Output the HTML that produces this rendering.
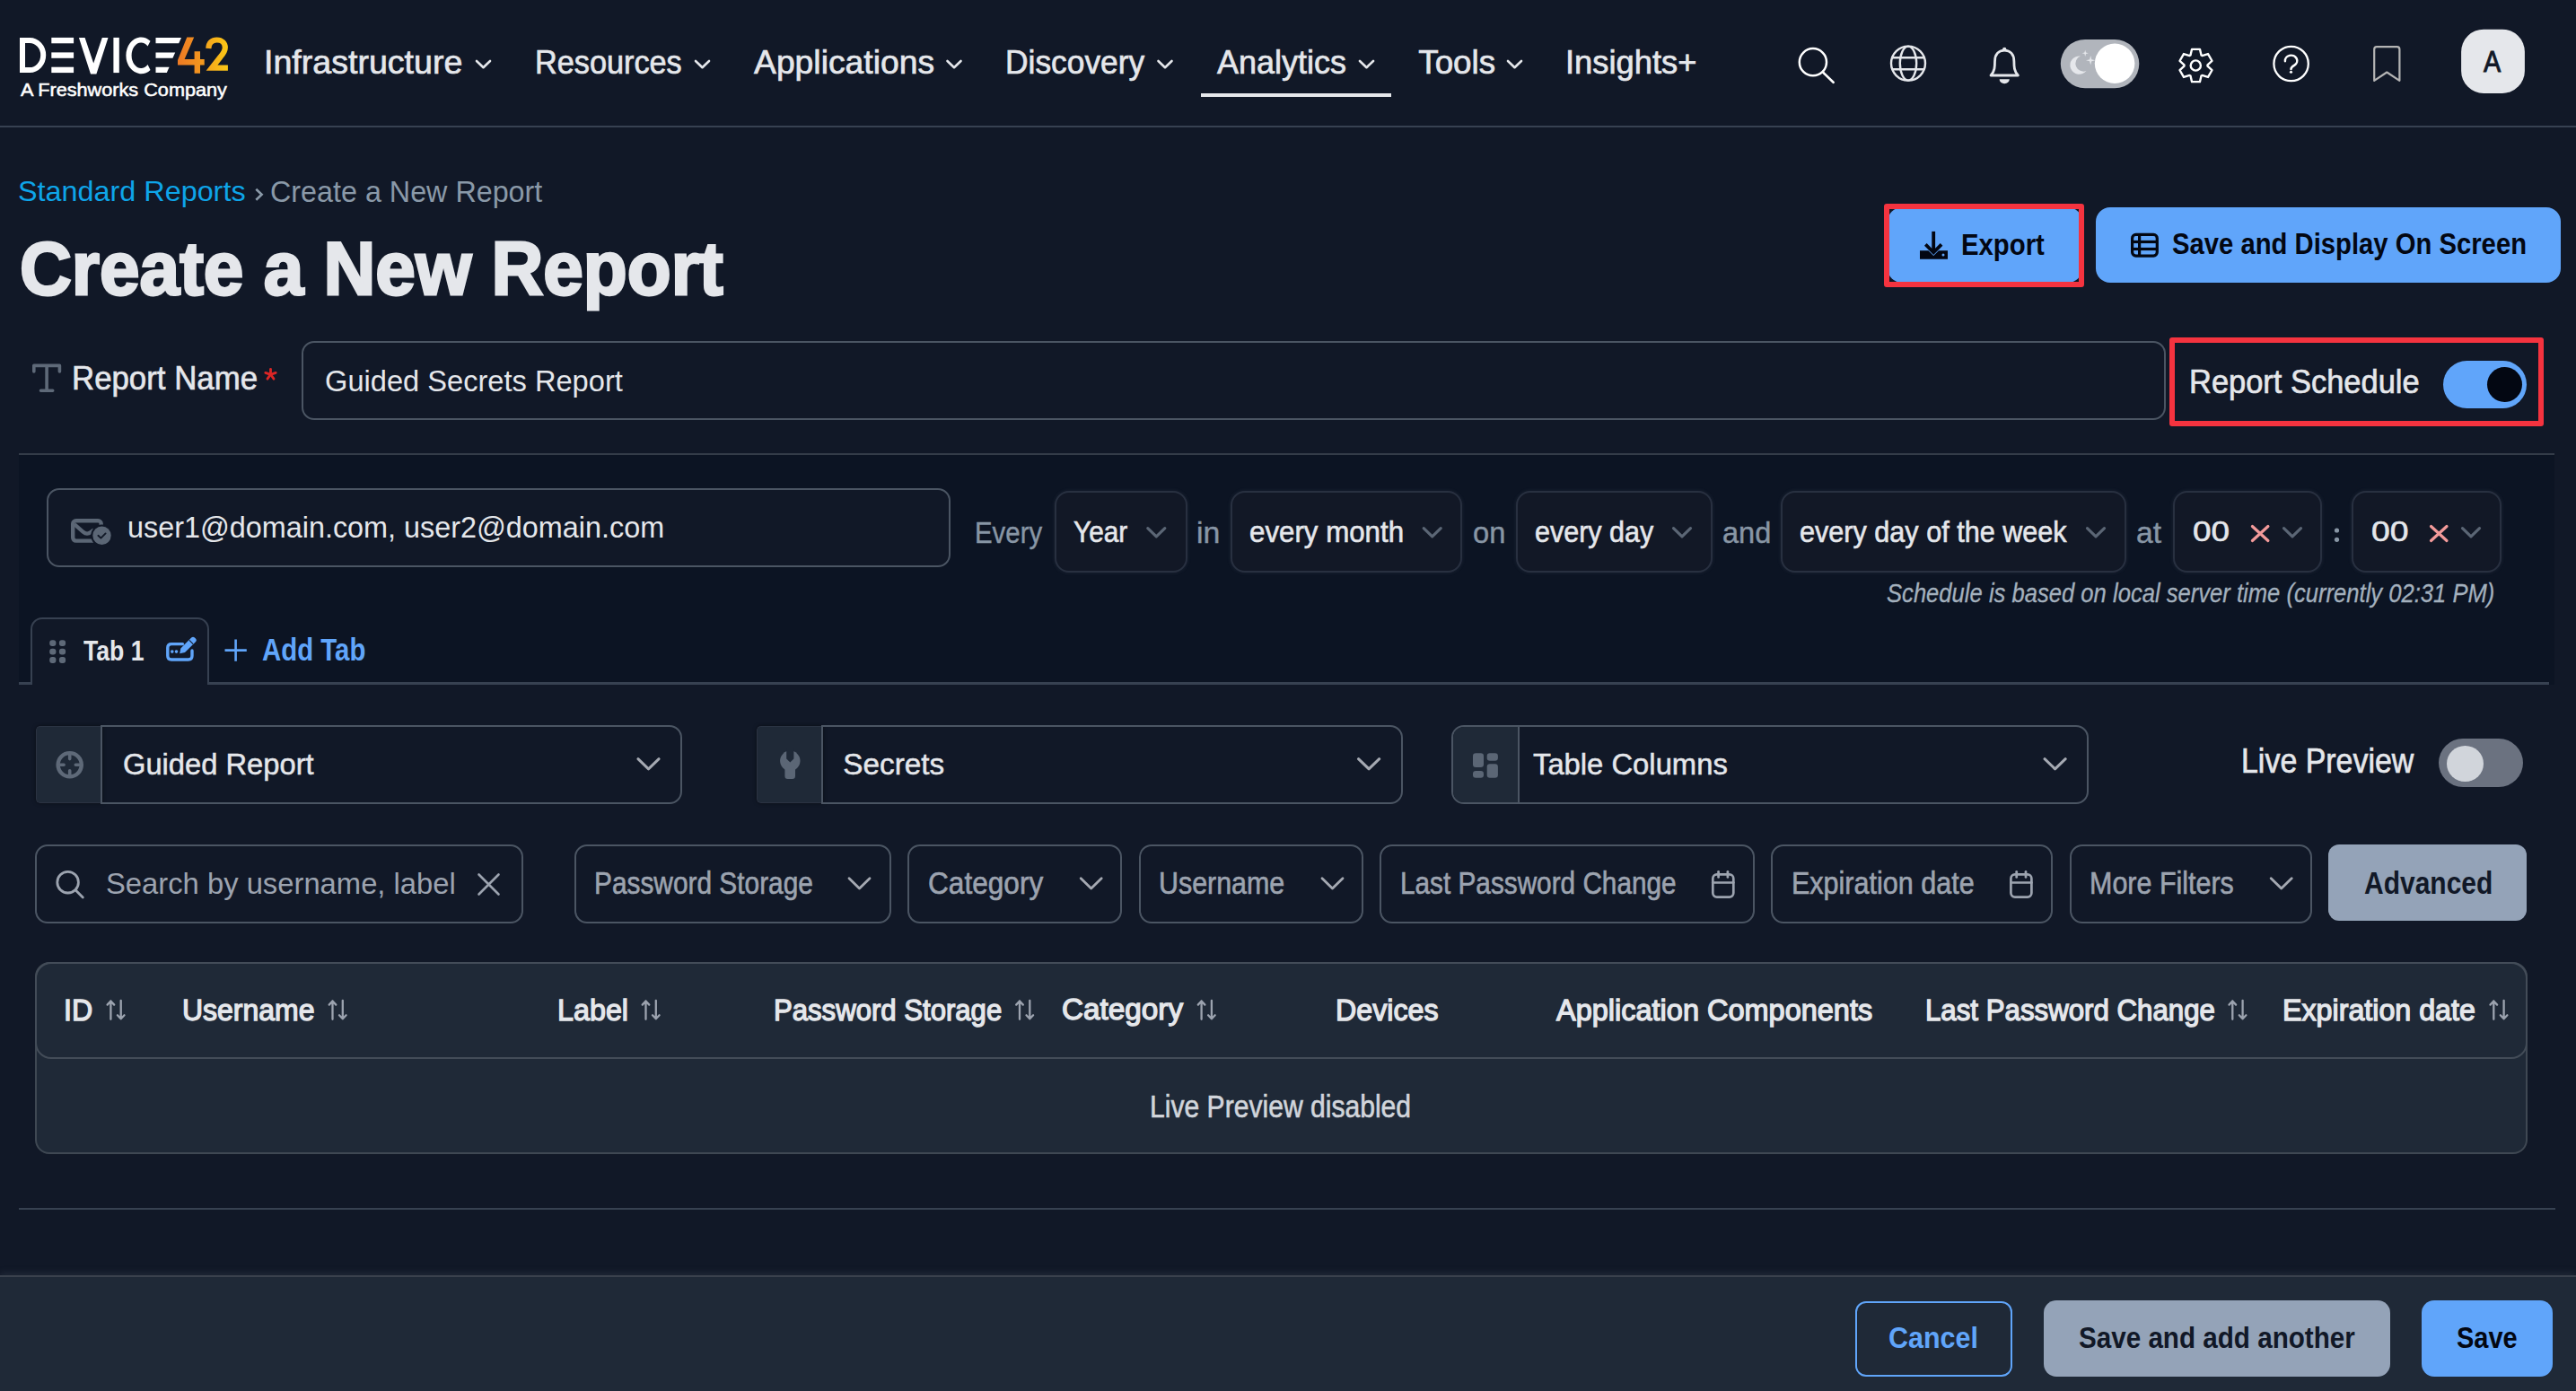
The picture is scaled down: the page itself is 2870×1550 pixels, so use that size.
<!DOCTYPE html>
<html><head><meta charset="utf-8"><title>Create a New Report</title>
<style>
html,body{margin:0;padding:0}
body{width:2870px;height:1550px;background:#111827;position:relative;overflow:hidden;font-family:"Liberation Sans",sans-serif}
.b{position:absolute}
.t{position:absolute;white-space:pre;line-height:1;transform-origin:0 0}
.ov{position:absolute;left:0;top:0}
</style></head><body>
<div class="b" style="left:0px;top:140px;width:2870px;height:2px;background:#374151"></div><div class="b" style="left:21px;top:505px;width:2825px;height:258px;background:#0c1423;border-top:2px solid #343c48;box-sizing:border-box"></div><div class="b" style="left:2103px;top:231px;width:217px;height:84px;background:#60a5fa;border-radius:16px"></div><div class="b" style="left:2335px;top:231px;width:518px;height:84px;background:#60a5fa;border-radius:16px"></div><div class="b" style="left:336px;top:380px;width:2077px;height:88px;border:2px solid #4b5563;border-radius:14px;box-sizing:border-box"></div><div class="b" style="left:52px;top:543.5px;width:1007px;height:88px;border:2px solid #4b5563;border-radius:14px;box-sizing:border-box;background:#111827"></div><div class="b" style="left:1174.5px;top:546.5px;width:148px;height:91.9px;background:#121826;border:2px solid #283040;border-radius:16px;box-sizing:border-box;box-shadow:0 0 4px rgba(120,130,150,0.16)"></div><div class="b" style="left:1370.8px;top:546.5px;width:258.2px;height:91.9px;background:#121826;border:2px solid #283040;border-radius:16px;box-sizing:border-box;box-shadow:0 0 4px rgba(120,130,150,0.16)"></div><div class="b" style="left:1688.7px;top:546.5px;width:219.3px;height:91.9px;background:#121826;border:2px solid #283040;border-radius:16px;box-sizing:border-box;box-shadow:0 0 4px rgba(120,130,150,0.16)"></div><div class="b" style="left:1984px;top:546.5px;width:384.6px;height:91.9px;background:#121826;border:2px solid #283040;border-radius:16px;box-sizing:border-box;box-shadow:0 0 4px rgba(120,130,150,0.16)"></div><div class="b" style="left:2420.7px;top:546.5px;width:166.8px;height:91.9px;background:#121826;border:2px solid #283040;border-radius:16px;box-sizing:border-box;box-shadow:0 0 4px rgba(120,130,150,0.16)"></div><div class="b" style="left:2619.6px;top:546.5px;width:167.9px;height:91.9px;background:#121826;border:2px solid #283040;border-radius:16px;box-sizing:border-box;box-shadow:0 0 4px rgba(120,130,150,0.16)"></div><div class="b" style="left:34px;top:687.5px;width:199px;height:75.5px;background:#111827;border:2.5px solid #374151;border-bottom:none;border-radius:13px 13px 0 0;box-sizing:border-box"></div><div class="b" style="left:21px;top:760px;width:13px;height:2.5px;background:#374151"></div><div class="b" style="left:233px;top:760px;width:2607px;height:2.5px;background:#374151"></div><div class="b" style="left:40px;top:808.5px;width:74px;height:86.5px;background:#1f2937;border:1.5px solid #2b3342;border-right:none;border-radius:5px 0 0 5px;box-sizing:border-box;box-shadow:0 0 4px rgba(0,0,0,0.5)"></div><div class="b" style="left:112px;top:808px;width:647.6px;height:88px;border:2px solid #4b5563;border-radius:0 14px 14px 0;box-sizing:border-box"></div><div class="b" style="left:843px;top:808.5px;width:74px;height:86.5px;background:#1f2937;border:1.5px solid #2b3342;border-right:none;border-radius:5px 0 0 5px;box-sizing:border-box;box-shadow:0 0 4px rgba(0,0,0,0.5)"></div><div class="b" style="left:915px;top:808px;width:648px;height:88px;border:2px solid #4b5563;border-radius:0 14px 14px 0;box-sizing:border-box"></div><div class="b" style="left:1617px;top:808px;width:710px;height:87.5px;border:2px solid #4b5563;border-radius:14px;box-sizing:border-box;overflow:hidden"></div><div class="b" style="left:1619px;top:810px;width:72px;height:83.5px;background:#1f2937;border-radius:12px 0 0 12px"></div><div class="b" style="left:1691px;top:810px;width:2px;height:83.5px;background:#4b5563"></div><div class="b" style="left:2716.8px;top:822.5px;width:94.2px;height:54.8px;background:#6b7280;border-radius:28px"></div><div class="b" style="left:2726px;top:830.5px;width:41px;height:40px;background:#d1d5db;border-radius:50%"></div><div class="b" style="left:2721.6px;top:401.8px;width:93px;height:53.5px;background:#60a5fa;border-radius:27px"></div><div class="b" style="left:2771px;top:408.5px;width:39px;height:39.1px;background:#030712;border-radius:50%"></div><div class="b" style="left:39px;top:941px;width:544px;height:88px;border:2px solid #4b5563;border-radius:14px;box-sizing:border-box"></div><div class="b" style="left:640px;top:941px;width:353px;height:88px;border:2px solid #4b5563;border-radius:14px;box-sizing:border-box"></div><div class="b" style="left:1011px;top:941px;width:239px;height:88px;border:2px solid #4b5563;border-radius:14px;box-sizing:border-box"></div><div class="b" style="left:1269px;top:941px;width:250px;height:88px;border:2px solid #4b5563;border-radius:14px;box-sizing:border-box"></div><div class="b" style="left:1537px;top:941px;width:418px;height:88px;border:2px solid #4b5563;border-radius:14px;box-sizing:border-box"></div><div class="b" style="left:1973px;top:941px;width:313.5px;height:88px;border:2px solid #4b5563;border-radius:14px;box-sizing:border-box"></div><div class="b" style="left:2305.7px;top:941px;width:270.3px;height:88px;border:2px solid #4b5563;border-radius:14px;box-sizing:border-box"></div><div class="b" style="left:2594px;top:941px;width:221px;height:85px;background:#94a3b8;border-radius:12px"></div><div class="b" style="left:39px;top:1072px;width:2777px;height:214px;background:#1f2937;border:2px solid #3f4853;border-radius:16px;box-sizing:border-box"></div><div class="b" style="left:39px;top:1072px;width:2777px;height:107.5px;border:2px solid #434c58;border-radius:18px;box-sizing:border-box"></div><div class="b" style="left:21px;top:1346px;width:2826px;height:2px;background:#374151"></div><div class="b" style="left:0px;top:1420.5px;width:2870px;height:129.5px;background:#1f2937;border-top:2px solid #3a414d;box-sizing:border-box;box-shadow:0 -4px 6px rgba(70,80,95,0.22)"></div><div class="b" style="left:2066.5px;top:1449.5px;width:175px;height:84px;border:2px solid #60a5fa;border-radius:12px;box-sizing:border-box"></div><div class="b" style="left:2277px;top:1449px;width:385.6px;height:84.5px;background:#94a3b8;border-radius:14px"></div><div class="b" style="left:2698px;top:1449px;width:145.6px;height:84.5px;background:#60a5fa;border-radius:14px"></div>
<svg class="ov" width="2870" height="1550" viewBox="0 0 2870 1550"><defs><linearGradient id="g4" x1="0" y1="0" x2="1" y2="0"><stop offset="0" stop-color="#ee7a24"/><stop offset="1" stop-color="#f39a1e"/></linearGradient><linearGradient id="g2" x1="0" y1="0" x2="1" y2="0"><stop offset="0" stop-color="#f5a81c"/><stop offset="1" stop-color="#fcc815"/></linearGradient></defs><path d="M25 45 V78 H33 A15.2 16.5 0 0 0 33 45 Z" fill="none" stroke="#ffffff" stroke-width="6"/><rect x="57.3" y="41.9" width="24.8" height="6.4" fill="#ffffff"/><rect x="57.3" y="58.4" width="24.8" height="6.4" fill="#ffffff"/><rect x="57.3" y="74.7" width="24.8" height="6.4" fill="#ffffff"/><polygon points="87.9,41.9 94.6,41.9 104.2,70.5 113.8,41.9 120.5,41.9 107.4,82.6 101,82.6" fill="#ffffff"/><rect x="126.4" y="41.9" width="6.4" height="39.2" fill="#ffffff"/><path d="M167.54 45.72 A16.8 20.4 0 1 0 167.54 77.88 L164.56 72.01 A10.6 14.2 0 1 1 164.56 51.59 Z" fill="#ffffff"/><polygon points="173.5,41.9 202,41.9 199.2,48.3 173.5,48.3" fill="#ffffff"/><polygon points="173.5,58.4 195.2,58.4 192.4,64.8 173.5,64.8" fill="#ffffff"/><polygon points="173.5,74.7 188.6,74.7 185.8,81.1 173.5,81.1" fill="#ffffff"/><polygon points="208.3,41.5 216.2,41.5 205.6,66 216.6,66 216.6,57.3 223,57.3 223,66 227.7,66 227.7,72.4 223,72.4 223,81.7 216.6,81.7 216.6,72.4 198,72.4 198,67" fill="url(#g4)"/><path d="M232.3 54 C232.6 47.5 236.5 44.5 241.5 44.5 C247.3 44.5 250.8 48.3 250.8 53 C250.8 57 249 59.5 245.5 63.5 L236 75.6 H253.9" fill="none" stroke="url(#g2)" stroke-width="6.2"/><path d="M531 68 L538.5 75.2 L546 68" fill="none" stroke="#e5e7eb" stroke-width="2.6" stroke-linecap="round" stroke-linejoin="round"/><path d="M775 68 L782.5 75.2 L790 68" fill="none" stroke="#e5e7eb" stroke-width="2.6" stroke-linecap="round" stroke-linejoin="round"/><path d="M1055.5 68 L1063.0 75.2 L1070.5 68" fill="none" stroke="#e5e7eb" stroke-width="2.6" stroke-linecap="round" stroke-linejoin="round"/><path d="M1290.5 68 L1298.0 75.2 L1305.5 68" fill="none" stroke="#e5e7eb" stroke-width="2.6" stroke-linecap="round" stroke-linejoin="round"/><path d="M1515 68 L1522.5 75.2 L1530 68" fill="none" stroke="#e5e7eb" stroke-width="2.6" stroke-linecap="round" stroke-linejoin="round"/><path d="M1680 68 L1687.5 75.2 L1695 68" fill="none" stroke="#e5e7eb" stroke-width="2.6" stroke-linecap="round" stroke-linejoin="round"/><rect x="1338" y="104" width="212" height="4" fill="#e5e7eb"/><circle cx="2019.9" cy="69.2" r="15.1" fill="none" stroke="#fff" stroke-width="2.5"/><line x1="2031" y1="80.5" x2="2042.6" y2="91.8" stroke="#fff" stroke-width="2.6" stroke-linecap="round"/><g fill="none" stroke="#e5e7eb" stroke-width="2.4"><circle cx="2126" cy="70.6" r="19"/><ellipse cx="2126" cy="70.6" rx="9.2" ry="19"/><line x1="2108" y1="64.3" x2="2144" y2="64.3"/><line x1="2108" y1="77.3" x2="2144" y2="77.3"/></g><path d="M2218 84 C2222.5 79.5 2222.5 74 2222.5 68.5 C2222.5 61 2226.5 56.2 2233.2 56.2 C2239.9 56.2 2243.9 61 2243.9 68.5 C2243.9 74 2243.9 79.5 2248.4 84 Z" fill="none" stroke="#e5e7eb" stroke-width="2.8" stroke-linejoin="round"/><circle cx="2233.2" cy="55" r="2.2" fill="#e5e7eb"/><path d="M2227.6 88.3 H2238.8 A5.6 5 0 0 1 2227.6 88.3 Z" fill="#e5e7eb"/><rect x="2295.8" y="43.9" width="87.5" height="54.4" rx="27.2" fill="#b1b5bc"/><circle cx="2356.1" cy="70.75" r="22.3" fill="#fff"/><path d="M2318 62.5 A10.2 10.2 0 1 0 2324.5 79 A8.2 8.2 0 0 1 2318 62.5 Z" fill="#e5e7eb"/><polygon points="2323.20,55.70 2323.98,58.52 2326.80,59.30 2323.98,60.08 2323.20,62.90 2322.42,60.08 2319.60,59.30 2322.42,58.52" fill="#e5e7eb"/><polygon points="2329.20,62.00 2330.26,66.14 2334.40,67.20 2330.26,68.26 2329.20,72.40 2328.14,68.26 2324.00,67.20 2328.14,66.14" fill="#e5e7eb"/><path d="M2440.50 61.47 L2442.05 54.84 L2450.95 54.84 L2452.50 61.47 L2453.48 62.04 L2460.01 60.07 L2464.45 67.77 L2459.49 72.43 L2459.49 73.57 L2464.45 78.23 L2460.01 85.93 L2453.48 83.96 L2452.50 84.53 L2450.95 91.16 L2442.05 91.16 L2440.50 84.53 L2439.52 83.96 L2432.99 85.93 L2428.55 78.23 L2433.51 73.57 L2433.51 72.43 L2428.55 67.77 L2432.99 60.07 L2439.52 62.04 Z" fill="none" stroke="#fff" stroke-width="2.4" stroke-linejoin="round"/><circle cx="2446.3" cy="73" r="5.6" fill="none" stroke="#fff" stroke-width="2.4"/><circle cx="2552.6" cy="71" r="19.2" fill="none" stroke="#fff" stroke-width="2.3"/><path d="M2545.9 68.2 A6.7 6.0 0 1 1 2556.4 72.6 C2553.9 74.1 2552.5 75 2552.5 76.9" fill="none" stroke="#fff" stroke-width="2.5" stroke-linecap="round"/><circle cx="2552.5" cy="80.2" r="1.55" fill="#fff"/><path d="M2645.2 89.8 V55 Q2645.2 52.2 2648 52.2 H2670.6 Q2673.4 52.2 2673.4 55 V89.8 L2659.3 80.5 Z" fill="none" stroke="#b4b4b4" stroke-width="2.2" stroke-linejoin="round"/><rect x="2742.1" y="32.7" width="70.8" height="71.2" rx="25" fill="#e5e7eb"/><path d="M285.3 210.8 L291.6 216.8 L285.3 222.8" fill="none" stroke="#8a99a8" stroke-width="2.6"/><rect x="2152.3" y="257.9" width="3.8" height="22" fill="#030712"/><path d="M2145.3 272.4 L2154.2 281.3 L2163.1 272.4" fill="none" stroke="#030712" stroke-width="3.7"/><polygon points="2139,279.2 2148.4,279.2 2154.2,285 2160,279.2 2170,279.2 2170,288.7 2139,288.7" fill="#030712"/><circle cx="2165" cy="284" r="1.5" fill="#60a5fa"/><g fill="none" stroke="#030712" stroke-width="3.2"><rect x="2375.6" y="261.4" width="27.7" height="23.7" rx="4"/><line x1="2383.6" y1="261.4" x2="2383.6" y2="285.1"/><line x1="2375.6" y1="269.5" x2="2403.3" y2="269.5"/><line x1="2375.6" y1="277.5" x2="2403.3" y2="277.5"/></g><path d="M37.8 414 V407.4 H66.4 V414 M52.1 407.4 V435.2 M45.5 435.2 H58.7" fill="none" stroke="#5e6978" stroke-width="3.6" stroke-linecap="round" stroke-linejoin="round"/><g stroke="#dc2626" stroke-width="2.8" stroke-linecap="round"><line x1="301.5" y1="417.3" x2="301.50" y2="411.30"/><line x1="301.5" y1="417.3" x2="307.21" y2="415.45"/><line x1="301.5" y1="417.3" x2="305.03" y2="422.15"/><line x1="301.5" y1="417.3" x2="297.97" y2="422.15"/><line x1="301.5" y1="417.3" x2="295.79" y2="415.45"/></g><rect x="81.2" y="580.3" width="31.5" height="22.3" rx="3.5" fill="none" stroke="#5b6675" stroke-width="4.4"/><path d="M82.8 584.2 L92.5 592.6 Q96.8 596.4 101.2 593 L104.5 590.4" fill="none" stroke="#5b6675" stroke-width="4.2" stroke-linejoin="round"/><circle cx="113.5" cy="596.8" r="12.3" fill="#111827"/><circle cx="113.5" cy="596.8" r="10.2" fill="#5b6675"/><path d="M109.4 596.8 L112.4 599.6 L117.6 594.4" fill="none" stroke="#111827" stroke-width="1.9" stroke-linecap="round" stroke-linejoin="round"/><path d="M1278.8 588.6 L1288.3 597.8 L1297.8 588.6" fill="none" stroke="#5b6675" stroke-width="3.2" stroke-linecap="round" stroke-linejoin="round"/><path d="M1586.2 588.6 L1595.7 597.8 L1605.2 588.6" fill="none" stroke="#5b6675" stroke-width="3.2" stroke-linecap="round" stroke-linejoin="round"/><path d="M1864.5 588.6 L1874 597.8 L1883.5 588.6" fill="none" stroke="#5b6675" stroke-width="3.2" stroke-linecap="round" stroke-linejoin="round"/><path d="M2325.5 588.6 L2335 597.8 L2344.5 588.6" fill="none" stroke="#5b6675" stroke-width="3.2" stroke-linecap="round" stroke-linejoin="round"/><path d="M2544.5 588.6 L2554 597.8 L2563.5 588.6" fill="none" stroke="#5b6675" stroke-width="3.2" stroke-linecap="round" stroke-linejoin="round"/><path d="M2743.5 588.6 L2753 597.8 L2762.5 588.6" fill="none" stroke="#5b6675" stroke-width="3.2" stroke-linecap="round" stroke-linejoin="round"/><path d="M2509.4 586.5 L2526.9 602.5 M2526.9 586.5 L2509.4 602.5" fill="none" stroke="#f39a9a" stroke-width="3.2" stroke-linecap="round"/><path d="M2708.5 586.5 L2726 602.5 M2726 586.5 L2708.5 602.5" fill="none" stroke="#f39a9a" stroke-width="3.2" stroke-linecap="round"/><circle cx="2603.5" cy="591" r="2.6" fill="#8896a5"/><circle cx="2603.5" cy="601.3" r="2.6" fill="#8896a5"/><rect x="55.2" y="713.3" width="7.2" height="6.8" rx="3" fill="#5e6978"/><rect x="55.2" y="722.7" width="7.2" height="6.8" rx="3" fill="#5e6978"/><rect x="55.2" y="732.1" width="7.2" height="6.8" rx="3" fill="#5e6978"/><rect x="65.9" y="713.3" width="7.2" height="6.8" rx="3" fill="#5e6978"/><rect x="65.9" y="722.7" width="7.2" height="6.8" rx="3" fill="#5e6978"/><rect x="65.9" y="732.1" width="7.2" height="6.8" rx="3" fill="#5e6978"/><path d="M203.5 717.6 H191 Q186.8 717.6 186.8 721.8 V730.8 Q186.8 735 191 735 H209.8 Q214 735 214 730.8 V725" fill="none" stroke="#60a5fa" stroke-width="3.4" stroke-linecap="round"/><path d="M200.2 728.2 L201.3 722.4 L213.2 710.6 A2.6 2.6 0 0 1 216.9 710.6 L217.9 711.6 A2.6 2.6 0 0 1 217.9 715.3 L206 727.1 Z" fill="#60a5fa"/><path d="M210.9 713.4 L215.1 717.6" stroke="#111827" stroke-width="1.1"/><circle cx="191.8" cy="726.1" r="1.8" fill="#60a5fa"/><circle cx="196.5" cy="726.1" r="1.8" fill="#60a5fa"/><path d="M250.5 724.6 H274.8 M262.6 712.4 V736.8" stroke="#60a5fa" stroke-width="2.6"/><circle cx="77.7" cy="852.2" r="13.1" fill="none" stroke="#5e6978" stroke-width="4.4"/><path d="M77.7 841.5 V845.6 M77.7 858.8 V862.9 M67 852.2 H71.1 M84.3 852.2 H88.4" stroke="#5e6978" stroke-width="3.6" stroke-linecap="round"/><circle cx="880.3" cy="847.8" r="11.2" fill="#5b6675"/><rect x="874.4" y="850" width="11.6" height="18" rx="3.2" fill="#5b6675"/><polygon points="876.2,833 884.4,833 884.4,845.4 880.3,849.6 876.2,845.4" fill="#1f2937"/><rect x="1641" y="839.3" width="12" height="15.8" rx="3.3" fill="#5b6675"/><rect x="1641" y="858.9" width="12" height="7.9" rx="3.3" fill="#5b6675"/><rect x="1656.7" y="839.3" width="12.2" height="8.4" rx="3.3" fill="#5b6675"/><rect x="1656.7" y="851.2" width="12.2" height="15.6" rx="3.3" fill="#5b6675"/><path d="M710.9 845.7 L722.5 856.8 L734.1 845.7" fill="none" stroke="#a5a9b2" stroke-width="3" stroke-linecap="round" stroke-linejoin="round"/><path d="M1513.5 845.7 L1525.1 856.8 L1536.7 845.7" fill="none" stroke="#a5a9b2" stroke-width="3" stroke-linecap="round" stroke-linejoin="round"/><path d="M2278 845.7 L2289.6 856.8 L2301.2 845.7" fill="none" stroke="#a5a9b2" stroke-width="3" stroke-linecap="round" stroke-linejoin="round"/><circle cx="75.6" cy="983.2" r="11.8" fill="none" stroke="#9ca3af" stroke-width="2.8"/><line x1="84.3" y1="991.9" x2="92.3" y2="999.9" stroke="#9ca3af" stroke-width="2.8" stroke-linecap="round"/><path d="M533.5 974.5 L555.5 996.5 M555.5 974.5 L533.5 996.5" stroke="#9ca3af" stroke-width="2.6" stroke-linecap="round"/><path d="M946.0 978.7 L957.5 990 L969.0 978.7" fill="none" stroke="#a5a9b2" stroke-width="2.8" stroke-linecap="round" stroke-linejoin="round"/><path d="M1204.2 978.7 L1215.7 990 L1227.2 978.7" fill="none" stroke="#a5a9b2" stroke-width="2.8" stroke-linecap="round" stroke-linejoin="round"/><path d="M1473.0 978.7 L1484.5 990 L1496.0 978.7" fill="none" stroke="#a5a9b2" stroke-width="2.8" stroke-linecap="round" stroke-linejoin="round"/><path d="M2530.2 978.7 L2541.7 990 L2553.2 978.7" fill="none" stroke="#a5a9b2" stroke-width="2.8" stroke-linecap="round" stroke-linejoin="round"/><g fill="none" stroke="#9ca3af" stroke-width="2.7" stroke-linecap="round"><rect x="1908.3000000000002" y="974.4" width="23" height="25.2" rx="4.5"/><line x1="1908.3000000000002" y1="983.5" x2="1931.3000000000002" y2="983.5"/><line x1="1914.6000000000001" y1="971.3" x2="1914.6000000000001" y2="977.5"/><line x1="1924.9" y1="971.3" x2="1924.9" y2="977.5"/></g><g fill="none" stroke="#9ca3af" stroke-width="2.7" stroke-linecap="round"><rect x="2240.4" y="974.4" width="23" height="25.2" rx="4.5"/><line x1="2240.4" y1="983.5" x2="2263.4" y2="983.5"/><line x1="2246.7" y1="971.3" x2="2246.7" y2="977.5"/><line x1="2257" y1="971.3" x2="2257" y2="977.5"/></g><path d="M123.39999999999999 1115.5 V1135.8 M119.6 1119.6 L123.39999999999999 1115.5 L127.2 1119.6 M134.7 1114.8 V1135.3 M130.9 1131.3 L134.7 1135.3 L138.5 1131.3" fill="none" stroke="#9ca3af" stroke-width="2.3" stroke-linecap="round" stroke-linejoin="round"/><path d="M370.5 1115.5 V1135.8 M366.7 1119.6 L370.5 1115.5 L374.29999999999995 1119.6 M381.79999999999995 1114.8 V1135.3 M378.0 1131.3 L381.79999999999995 1135.3 L385.59999999999997 1131.3" fill="none" stroke="#9ca3af" stroke-width="2.3" stroke-linecap="round" stroke-linejoin="round"/><path d="M719.5 1115.5 V1135.8 M715.6999999999999 1119.6 L719.5 1115.5 L723.3 1119.6 M730.8 1114.8 V1135.3 M727.0 1131.3 L730.8 1135.3 L734.6 1131.3" fill="none" stroke="#9ca3af" stroke-width="2.3" stroke-linecap="round" stroke-linejoin="round"/><path d="M1136.0 1115.5 V1135.8 M1132.2 1119.6 L1136.0 1115.5 L1139.8000000000002 1119.6 M1147.3000000000002 1114.8 V1135.3 M1143.5 1131.3 L1147.3000000000002 1135.3 L1151.1000000000001 1131.3" fill="none" stroke="#9ca3af" stroke-width="2.3" stroke-linecap="round" stroke-linejoin="round"/><path d="M1338.6 1115.5 V1135.8 M1334.8 1119.6 L1338.6 1115.5 L1342.4 1119.6 M1349.9 1114.8 V1135.3 M1346.1 1131.3 L1349.9 1135.3 L1353.7 1131.3" fill="none" stroke="#9ca3af" stroke-width="2.3" stroke-linecap="round" stroke-linejoin="round"/><path d="M2487.2999999999997 1115.5 V1135.8 M2483.5 1119.6 L2487.2999999999997 1115.5 L2491.1 1119.6 M2498.6 1114.8 V1135.3 M2494.7999999999997 1131.3 L2498.6 1135.3 L2502.3999999999996 1131.3" fill="none" stroke="#9ca3af" stroke-width="2.3" stroke-linecap="round" stroke-linejoin="round"/><path d="M2778.2999999999997 1115.5 V1135.8 M2774.5 1119.6 L2778.2999999999997 1115.5 L2782.1 1119.6 M2789.6 1114.8 V1135.3 M2785.7999999999997 1131.3 L2789.6 1135.3 L2793.3999999999996 1131.3" fill="none" stroke="#9ca3af" stroke-width="2.3" stroke-linecap="round" stroke-linejoin="round"/></svg>
<div class="t" style="left:22.70px;top:90.18px;font-size:20.14px;color:#ffffff;transform:scaleX(1.0761);-webkit-text-stroke:0.51px #ffffff;">A Freshworks Company</div><div class="t" style="left:294.12px;top:51.81px;font-size:36.81px;color:#e5e7eb;transform:scaleX(1.0211);-webkit-text-stroke:0.66px #e5e7eb;">Infrastructure</div><div class="t" style="left:596.26px;top:52.26px;font-size:36.29px;color:#e5e7eb;transform:scaleX(0.9442);-webkit-text-stroke:0.65px #e5e7eb;">Resources</div><div class="t" style="left:840.00px;top:51.81px;font-size:36.81px;color:#e5e7eb;transform:scaleX(1.0136);-webkit-text-stroke:0.66px #e5e7eb;">Applications</div><div class="t" style="left:1120.17px;top:51.81px;font-size:36.81px;color:#e5e7eb;transform:scaleX(0.9612);-webkit-text-stroke:0.66px #e5e7eb;">Discovery</div><div class="t" style="left:1356.00px;top:51.81px;font-size:36.81px;color:#e5e7eb;transform:scaleX(0.9785);-webkit-text-stroke:0.66px #e5e7eb;">Analytics</div><div class="t" style="left:1580.26px;top:51.81px;font-size:36.81px;color:#e5e7eb;-webkit-text-stroke:0.66px #e5e7eb;">Tools</div><div class="t" style="left:1744.23px;top:51.81px;font-size:36.81px;color:#e5e7eb;transform:scaleX(0.9881);-webkit-text-stroke:0.66px #e5e7eb;">Insights+</div><div class="t" style="left:2767.00px;top:52.40px;font-size:33.77px;color:#111827;transform:scaleX(0.8525);-webkit-text-stroke:0.97px #111827;">A</div><div class="t" style="left:20.38px;top:197.62px;font-size:31.86px;color:#0ea5e9;transform:scaleX(1.0154);">Standard Reports</div><div class="t" style="left:300.79px;top:197.25px;font-size:33.00px;color:#8a99a8;transform:scaleX(0.9785);">Create a New Report</div><div class="t" style="left:21.80px;top:259.07px;font-size:82.86px;color:#e5e7eb;font-weight:700;transform:scaleX(0.9669);-webkit-text-stroke:2.83px #e5e7eb;">Create a New Report</div><div class="t" style="left:2184.95px;top:256.07px;font-size:33.33px;color:#030712;font-weight:700;transform:scaleX(0.8796);">Export</div><div class="t" style="left:2419.92px;top:256.47px;font-size:32.86px;color:#030712;font-weight:700;transform:scaleX(0.8901);">Save and Display On Screen</div><div class="t" style="left:79.92px;top:403.67px;font-size:36.86px;color:#e5e7eb;transform:scaleX(0.9445);-webkit-text-stroke:0.66px #e5e7eb;">Report Name</div><div class="t" style="left:361.77px;top:408.94px;font-size:32.43px;color:#e5e7eb;transform:scaleX(1.0062);">Guided Secrets Report</div><div class="t" style="left:2439.24px;top:407.01px;font-size:37.29px;color:#e5e7eb;transform:scaleX(0.9242);-webkit-text-stroke:0.67px #e5e7eb;">Report Schedule</div><div class="t" style="left:141.56px;top:570.71px;font-size:33.29px;color:#e5e7eb;transform:scaleX(0.9724);">user1@domain.com, user2@domain.com</div><div class="t" style="left:1085.65px;top:576.71px;font-size:33.04px;color:#8896a5;transform:scaleX(0.8895);-webkit-text-stroke:0.42px #8896a5;">Every</div><div class="t" style="left:1332.63px;top:576.71px;font-size:33.04px;color:#8896a5;transform:scaleX(1.0243);-webkit-text-stroke:0.42px #8896a5;">in</div><div class="t" style="left:1640.69px;top:576.71px;font-size:33.04px;color:#8896a5;transform:scaleX(0.9888);-webkit-text-stroke:0.42px #8896a5;">on</div><div class="t" style="left:1918.70px;top:576.71px;font-size:33.04px;color:#8896a5;transform:scaleX(0.9855);-webkit-text-stroke:0.42px #8896a5;">and</div><div class="t" style="left:2380.05px;top:576.71px;font-size:33.04px;color:#8896a5;transform:scaleX(1.0190);-webkit-text-stroke:0.42px #8896a5;">at</div><div class="t" style="left:1196.40px;top:575.60px;font-size:33.77px;color:#e5e7eb;transform:scaleX(0.8825);-webkit-text-stroke:0.61px #e5e7eb;">Year</div><div class="t" style="left:1392.45px;top:575.60px;font-size:33.77px;color:#e5e7eb;transform:scaleX(0.9263);-webkit-text-stroke:0.61px #e5e7eb;">every month</div><div class="t" style="left:1709.78px;top:575.60px;font-size:33.77px;color:#e5e7eb;transform:scaleX(0.9029);-webkit-text-stroke:0.61px #e5e7eb;">every day</div><div class="t" style="left:2005.18px;top:575.60px;font-size:33.77px;color:#e5e7eb;transform:scaleX(0.9061);-webkit-text-stroke:0.61px #e5e7eb;">every day of the week</div><div class="t" style="left:2442.52px;top:577.89px;font-size:30.71px;color:#e5e7eb;transform:scaleX(1.2012);-webkit-text-stroke:0.55px #e5e7eb;">00</div><div class="t" style="left:2641.51px;top:577.89px;font-size:30.71px;color:#e5e7eb;transform:scaleX(1.2138);-webkit-text-stroke:0.55px #e5e7eb;">00</div><div class="t" style="left:2102.23px;top:647.03px;font-size:29.14px;color:#a3b0bd;font-style:italic;transform:scaleX(0.8791);-webkit-text-stroke:0.31px #a3b0bd;">Schedule is based on local server time (currently 02:31 PM)</div><div class="t" style="left:92.53px;top:710.04px;font-size:31.01px;color:#e5e7eb;font-weight:700;transform:scaleX(0.8590);">Tab 1</div><div class="t" style="left:292.12px;top:706.86px;font-size:34.29px;color:#60a5fa;font-weight:700;transform:scaleX(0.8576);">Add Tab</div><div class="t" style="left:137.17px;top:834.91px;font-size:33.29px;color:#e5e7eb;transform:scaleX(0.9823);-webkit-text-stroke:0.48px #e5e7eb;">Guided Report</div><div class="t" style="left:939.34px;top:834.91px;font-size:33.29px;color:#e5e7eb;-webkit-text-stroke:0.48px #e5e7eb;">Secrets</div><div class="t" style="left:1708.34px;top:834.50px;font-size:33.77px;color:#e5e7eb;transform:scaleX(0.9706);-webkit-text-stroke:0.49px #e5e7eb;">Table Columns</div><div class="t" style="left:2497.29px;top:828.63px;font-size:38.55px;color:#e5e7eb;transform:scaleX(0.8803);-webkit-text-stroke:0.69px #e5e7eb;">Live Preview</div><div class="t" style="left:118.36px;top:968.42px;font-size:33.86px;color:#9ca3af;transform:scaleX(0.9678);">Search by username, label</div><div class="t" style="left:662.21px;top:966.93px;font-size:34.78px;color:#9ca3af;transform:scaleX(0.8586);-webkit-text-stroke:0.63px #9ca3af;">Password Storage</div><div class="t" style="left:1034.42px;top:967.36px;font-size:34.29px;color:#9ca3af;transform:scaleX(0.9216);-webkit-text-stroke:0.62px #9ca3af;">Category</div><div class="t" style="left:1291.37px;top:966.93px;font-size:34.78px;color:#9ca3af;transform:scaleX(0.8747);-webkit-text-stroke:0.63px #9ca3af;">Username</div><div class="t" style="left:1560.42px;top:966.93px;font-size:34.78px;color:#9ca3af;transform:scaleX(0.8557);-webkit-text-stroke:0.63px #9ca3af;">Last Password Change</div><div class="t" style="left:1995.86px;top:966.93px;font-size:34.78px;color:#9ca3af;transform:scaleX(0.8779);-webkit-text-stroke:0.63px #9ca3af;">Expiration date</div><div class="t" style="left:2328.26px;top:966.93px;font-size:34.78px;color:#9ca3af;transform:scaleX(0.8764);-webkit-text-stroke:0.63px #9ca3af;">More Filters</div><div class="t" style="left:2633.50px;top:967.36px;font-size:34.29px;color:#111827;font-weight:700;transform:scaleX(0.8750);">Advanced</div><div class="t" style="left:71.10px;top:1108.67px;font-size:33.33px;color:#e5e7eb;transform:scaleX(0.9663);-webkit-text-stroke:1.32px #e5e7eb;">ID</div><div class="t" style="left:202.84px;top:1108.67px;font-size:33.33px;color:#e5e7eb;transform:scaleX(0.9595);-webkit-text-stroke:1.32px #e5e7eb;">Username</div><div class="t" style="left:621.12px;top:1108.67px;font-size:33.33px;color:#e5e7eb;transform:scaleX(0.9691);-webkit-text-stroke:1.32px #e5e7eb;">Label</div><div class="t" style="left:861.51px;top:1108.67px;font-size:33.33px;color:#e5e7eb;transform:scaleX(0.9335);-webkit-text-stroke:1.32px #e5e7eb;">Password Storage</div><div class="t" style="left:1183.14px;top:1109.07px;font-size:32.86px;color:#e5e7eb;transform:scaleX(1.0132);-webkit-text-stroke:1.30px #e5e7eb;">Category</div><div class="t" style="left:1487.82px;top:1108.67px;font-size:33.33px;color:#e5e7eb;transform:scaleX(0.9663);-webkit-text-stroke:1.32px #e5e7eb;">Devices</div><div class="t" style="left:1734.00px;top:1108.67px;font-size:33.33px;color:#e5e7eb;transform:scaleX(0.9749);-webkit-text-stroke:1.32px #e5e7eb;">Application Components</div><div class="t" style="left:2145.30px;top:1108.67px;font-size:33.33px;color:#e5e7eb;transform:scaleX(0.9370);-webkit-text-stroke:1.32px #e5e7eb;">Last Password Change</div><div class="t" style="left:2543.22px;top:1108.67px;font-size:33.33px;color:#e5e7eb;transform:scaleX(0.9664);-webkit-text-stroke:1.32px #e5e7eb;">Expiration date</div><div class="t" style="left:1280.99px;top:1214.79px;font-size:35.07px;color:#d1d5db;transform:scaleX(0.8584);-webkit-text-stroke:0.63px #d1d5db;">Live Preview disabled</div><div class="t" style="left:2104.18px;top:1474.56px;font-size:32.29px;color:#60a5fa;font-weight:700;transform:scaleX(0.9439);">Cancel</div><div class="t" style="left:2315.51px;top:1474.56px;font-size:32.29px;color:#111827;font-weight:700;transform:scaleX(0.9175);">Save and add another</div><div class="t" style="left:2737.13px;top:1474.56px;font-size:32.29px;color:#030712;font-weight:700;transform:scaleX(0.8978);">Save</div>
<div class="b" style="left:2099px;top:227px;width:222.5px;height:92.5px;border:6px solid #f5333f;border-radius:3px;box-sizing:border-box"></div><div class="b" style="left:2417px;top:376px;width:417px;height:98.5px;border:6px solid #f5333f;border-radius:3px;box-sizing:border-box"></div>
</body></html>
